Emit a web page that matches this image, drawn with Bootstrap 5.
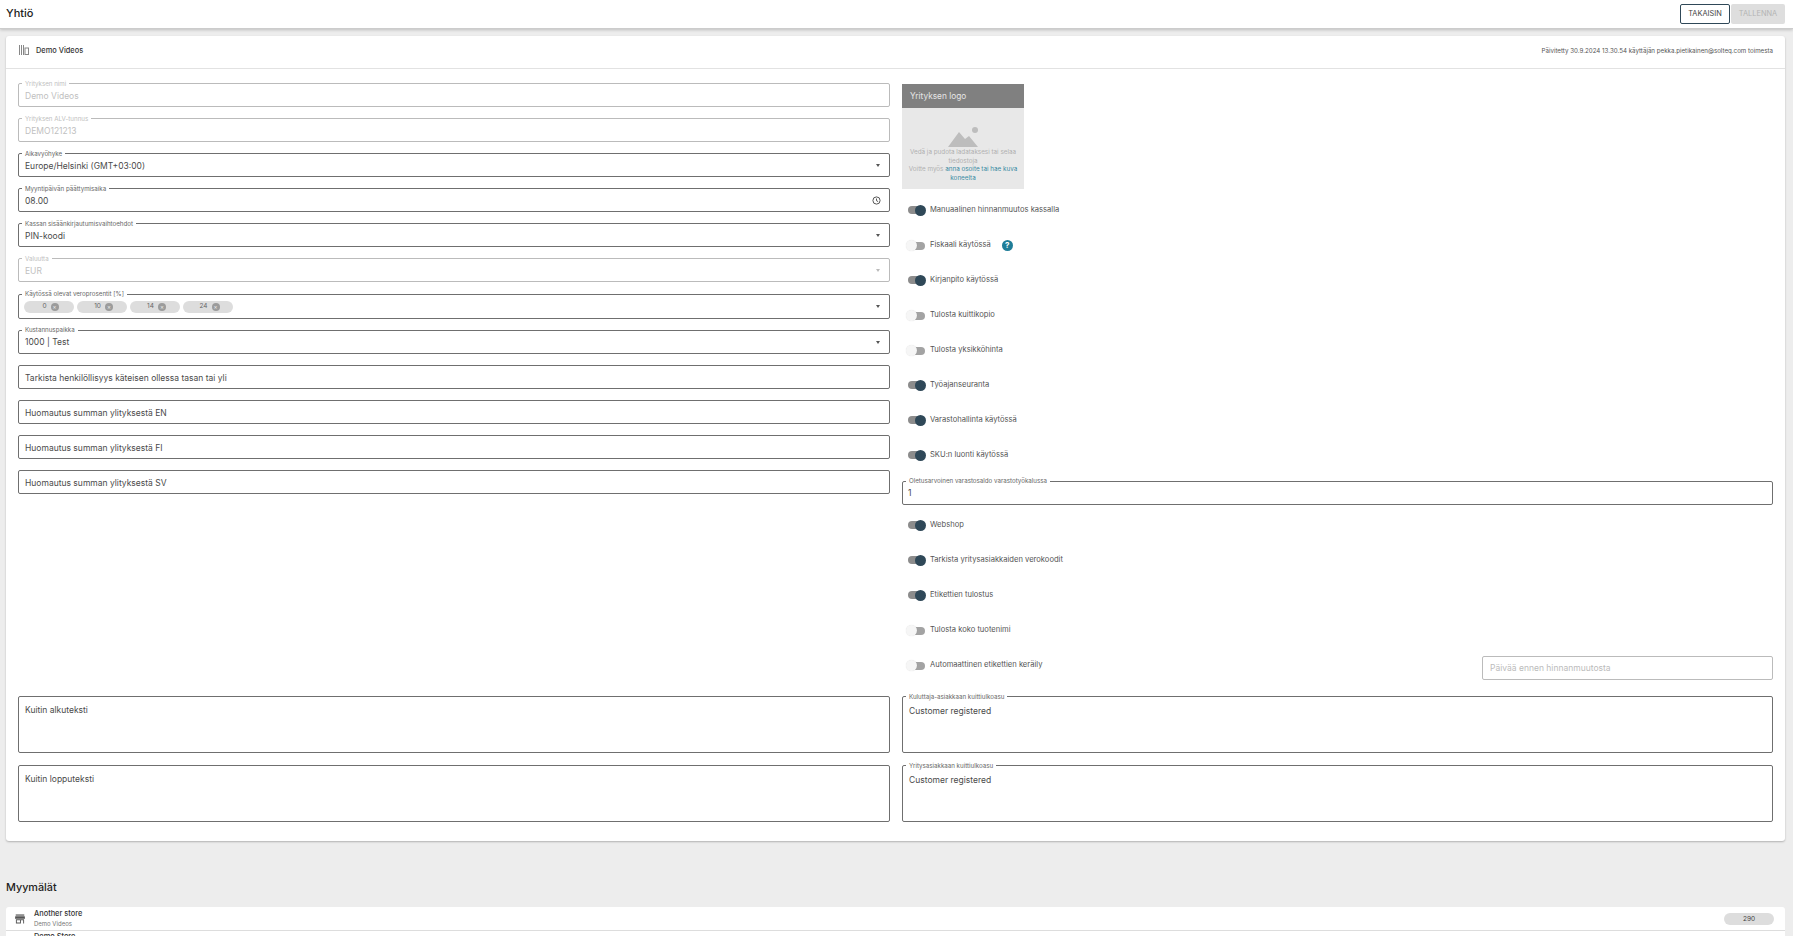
<!DOCTYPE html>
<html lang="fi">
<head>
<meta charset="utf-8">
<title>Yhtiö</title>
<link href="https://cdn.jsdelivr.net/npm/bootstrap@5.3.0/dist/css/bootstrap.min.css" rel="stylesheet">
<style>
html,body{height:936px;overflow:hidden}
body{background:#ededed;font-family:Inter,"Liberation Sans",sans-serif;color:#333;font-size:8.5px}
.topbar{height:29px;background:#fff;border-bottom:1px solid #ccc;box-shadow:0 1px 3px rgba(0,0,0,.2);padding:0 8px 0 6px}
.topbar h1{font-size:11px;font-weight:500;margin:0;color:#222}
.btngroup{gap:1px}
.btn-back,.btn-save{height:20px;width:50px;padding:0;font-size:7.4px;border-radius:2px;display:flex;align-items:center;justify-content:center}
.btn-back{border:1px solid #2f4858;background:#fff;color:#444}
.btn-save{width:54px;border:0;background:#dedede;color:#b4b4b4}
.mainsheet{margin:7px 8px 0 6px;background:#fff;border-radius:3px;box-shadow:0 1px 2px rgba(0,0,0,.25)}
.sheethead{height:33px;border-bottom:1px solid #e2e2e2;padding:0 12px 3px 13px}
.sheethead b{font-weight:500;font-size:7.4px;color:#333;margin-left:-1px}
.sheethead .upd{font-size:6.2px;color:#555}
.sheetbody{padding:14px 12px 19px 12px}
.colgrid{display:grid;grid-template-columns:872px 871px;column-gap:12px}
.fld{position:relative;height:24px;border:1px solid #6f6f6f;border-radius:2px;margin-bottom:11.1px;padding:0 5px 0 6px;display:flex;align-items:center;font-size:8.5px;color:#4a4a4a;background:#fff;padding-top:2px}
.fld.plain{padding-top:3px}
.fld.off{border-color:#bbb;color:#bfbfbf}
.fld.tall{height:25px;padding-left:5px;gap:3px}
.fld label{position:absolute;left:3px;top:-4.5px;background:#fff;padding:0 3px;font-size:6.2px;line-height:8px;color:#666}
.fld.off label{color:#c0c0c0}
.fld .caretdn{position:absolute;right:9px;top:10px;width:0;height:0;border:2.5px solid transparent;border-top:3px solid #555;border-bottom:0}
.fld.off .caretdn{border-top-color:#bbb}
.fld svg.clk{position:absolute;right:8px;top:7px}
.tagchip{width:50px;height:12px;border-radius:6px;background:#ddd;display:flex;align-items:center;justify-content:center;gap:4px;font-size:6.5px;color:#666;padding-left:3px}
.tagchip i{width:8px;height:8px;border-radius:50%;background:#9c9c9c;color:#eee;font-style:normal;font-size:6px;line-height:8px;text-align:center;display:block}
.spacerleft{height:191px}
.txa{position:relative;height:57px;border:1px solid #6f6f6f;border-radius:2px;padding:7px 6px;font-size:8.5px;color:#4a4a4a;margin-bottom:12px}
.txa.labelled{padding-top:8px}
.txa label{position:absolute;left:3px;top:-4.5px;background:#fff;padding:0 3px;font-size:6.2px;line-height:8px;color:#666}
.txa:last-child{margin-bottom:0}
.logobox{width:122px;height:105px;background:#e8e8e8;margin:1px 0 3.5px}
.logohead{height:24px;background:#808080;color:#e6e6e6;font-size:8.3px;display:flex;align-items:center;padding-left:8px}
.logoicon{padding-top:19px;padding-bottom:1px}
.logoicon svg{display:block}
.logotext{font-size:6.3px;line-height:8.7px;color:#b0b0b0;text-align:center;padding:0 6px}
.logotext a{color:#3a8ba3;text-decoration:none}
.swrow{height:35px;display:flex;align-items:center;padding-left:6px;gap:4px;font-size:7.6px;color:#555}
.swtrack{position:relative;width:17px;height:8px;border-radius:4px;background:#8c8c8c;flex:none;margin-right:1px}
.swtrack::after{content:"";position:absolute;top:-1.5px;right:-1px;width:11px;height:11px;border-radius:50%;background:#2f4858}
.swtrack.isoff{background:#a3a3a3;margin-top:1px}
.swtrack.isoff::after{right:auto;left:-2px;background:#f6f6f6;box-shadow:0 0 1px rgba(0,0,0,.15)}
.helpdot{width:11px;height:11px;border-radius:50%;background:#1f7d98;color:#fff;font-size:8px;font-weight:700;line-height:11px;text-align:center;margin-left:7px}
.fld.rightfld{margin:8px 0 3px;height:24px;padding-left:5px}
.pricefld{width:291px;height:24px;border:1px solid #bbb;border-radius:2px;padding:2px 7px 0;display:flex;align-items:center;font-size:8.5px;color:#bbb;margin-left:auto;margin-top:5px}
.gapbeforetxa{height:13.5px}
.sectiontitle{font-size:10.8px;font-weight:500;color:#222;margin:39px 0 0 6px;line-height:16px}
.storelist{margin:11px 8px 0 6px;background:#fff;border-radius:3px}
.storeline{height:24px;border-bottom:1px solid #ddd;display:flex;align-items:center;padding:0 11px 0 9px}
.storeline .nm{font-size:7.4px;font-weight:500;line-height:10px;color:#333}
.storeline .sb{font-size:6px;line-height:9px;color:#777}
.storetxt{margin-left:9px}
.storetxt.noicon{margin-left:19px;align-self:flex-start;margin-top:1px}
.countpill{width:50px;height:12px;border-radius:6px;background:#ddd;font-size:6.5px;color:#444;text-align:center;line-height:12px;margin-left:auto}
</style>
</head>
<body>
<div class="topbar d-flex align-items-center justify-content-between">
  <h1>Yhtiö</h1>
  <div class="d-flex btngroup">
    <button class="btn-back">TAKAISIN</button>
    <button class="btn-save">TALLENNA</button>
  </div>
</div>
<div class="mainsheet">
  <div class="sheethead d-flex align-items-center justify-content-between">
    <div class="d-flex align-items-center gap-2">
      <svg width="10" height="10" viewBox="0 0 10 10" fill="none" stroke="#888" stroke-width="1"><path d="M.5 0v10M2.5 0v10M4.5 0v10"/><rect x="6" y="3" width="3.5" height="6.5"/></svg>
      <b>Demo Videos</b>
    </div>
    <div class="upd">Päivitetty 30.9.2024 13.30.54 käyttäjän pekka.pietikainen@solteq.com toimesta</div>
  </div>
  <div class="sheetbody">
    <div class="colgrid">
      <div>
        <div class="fld off"><label>Yrityksen nimi</label>Demo Videos</div>
        <div class="fld off"><label>Yrityksen ALV-tunnus</label>DEMO121213</div>
        <div class="fld"><label>Aikavyöhyke</label>Europe/Helsinki (GMT+03:00)<span class="caretdn"></span></div>
        <div class="fld"><label>Myyntipäivän päättymisaika</label>08.00<svg class="clk" width="9" height="9" viewBox="0 0 9 9" fill="none" stroke="#444" stroke-width=".9"><circle cx="4.5" cy="4.5" r="3.6"/><path d="M4.5 2.5v2.2l1.6.9"/></svg></div>
        <div class="fld"><label>Kassan sisäänkirjautumisvaihtoehdot</label>PIN-koodi<span class="caretdn"></span></div>
        <div class="fld off"><label>Valuutta</label>EUR<span class="caretdn"></span></div>
        <div class="fld tall"><label>Käytössä olevat veroprosentit [%]</label>
          <div class="tagchip">0<i>×</i></div><div class="tagchip">10<i>×</i></div><div class="tagchip">14<i>×</i></div><div class="tagchip">24<i>×</i></div>
          <span class="caretdn"></span></div>
        <div class="fld"><label>Kustannuspaikka</label>1000 | Test<span class="caretdn"></span></div>
        <div class="fld plain">Tarkista henkilöllisyys käteisen ollessa tasan tai yli</div>
        <div class="fld plain">Huomautus summan ylityksestä EN</div>
        <div class="fld plain">Huomautus summan ylityksestä FI</div>
        <div class="fld plain">Huomautus summan ylityksestä SV</div>
        <div class="spacerleft"></div>
        <div class="txa">Kuitin alkuteksti</div>
        <div class="txa">Kuitin lopputeksti</div>
      </div>
      <div>
        <div class="logobox">
          <div class="logohead">Yrityksen logo</div>
          <div class="d-flex justify-content-center logoicon">
            <svg width="30" height="20" viewBox="0 0 30 20" fill="#bdbdbd"><circle cx="27" cy="3" r="3"/><path d="M0 20 11 5l6 7 4-3 9 11z"/></svg>
          </div>
          <div class="logotext">Vedä ja pudota ladataksesi tai selaa tiedostoja<br>Voitte myös <a href="#">anna osoite tai hae kuva koneelta</a></div>
        </div>
        <div class="swrow"><span class="swtrack"></span>Manuaalinen hinnanmuutos kassalla</div>
        <div class="swrow"><span class="swtrack isoff"></span>Fiskaali käytössä<span class="helpdot">?</span></div>
        <div class="swrow"><span class="swtrack"></span>Kirjanpito käytössä</div>
        <div class="swrow"><span class="swtrack isoff"></span>Tulosta kuittikopio</div>
        <div class="swrow"><span class="swtrack isoff"></span>Tulosta yksikköhinta</div>
        <div class="swrow"><span class="swtrack"></span>Työajanseuranta</div>
        <div class="swrow"><span class="swtrack"></span>Varastohallinta käytössä</div>
        <div class="swrow"><span class="swtrack"></span>SKU:n luonti käytössä</div>
        <div class="fld rightfld"><label>Oletusarvoinen varastosaldo varastotyökalussa</label>1</div>
        <div class="swrow"><span class="swtrack"></span>Webshop</div>
        <div class="swrow"><span class="swtrack"></span>Tarkista yritysasiakkaiden verokoodit</div>
        <div class="swrow"><span class="swtrack"></span>Etikettien tulostus</div>
        <div class="swrow"><span class="swtrack isoff"></span>Tulosta koko tuotenimi</div>
        <div class="d-flex align-items-center">
          <div class="swrow"><span class="swtrack isoff"></span>Automaattinen etikettien keräily</div>
          <div class="pricefld">Päivää ennen hinnanmuutosta</div>
        </div>
        <div class="gapbeforetxa"></div>
        <div class="txa labelled"><label>Kuluttaja-asiakkaan kuittiulkoasu</label>Customer registered</div>
        <div class="txa labelled"><label>Yritysasiakkaan kuittiulkoasu</label>Customer registered</div>
      </div>
    </div>
  </div>
</div>
<div class="sectiontitle">Myymälät</div>
<div class="storelist">
  <div class="storeline">
    <svg width="10" height="10" viewBox="0 0 11 10" fill="#555"><rect x=".8" y="0" width="9.4" height="1.3"/><path d="M.3 2h10.4l.3 2.8H0z"/><path d="M1 5.4h9V10H9V6.3H6.5V10H1zM2 6.3v2.5h3.5V6.3z"/></svg>
    <div class="storetxt"><div class="nm">Another store</div><div class="sb">Demo Videos</div></div>
    <div class="countpill">290</div>
  </div>
  <div class="storeline">
    <div class="storetxt noicon"><div class="nm">Demo Store</div></div>
  </div>
</div>
</body>
</html>
